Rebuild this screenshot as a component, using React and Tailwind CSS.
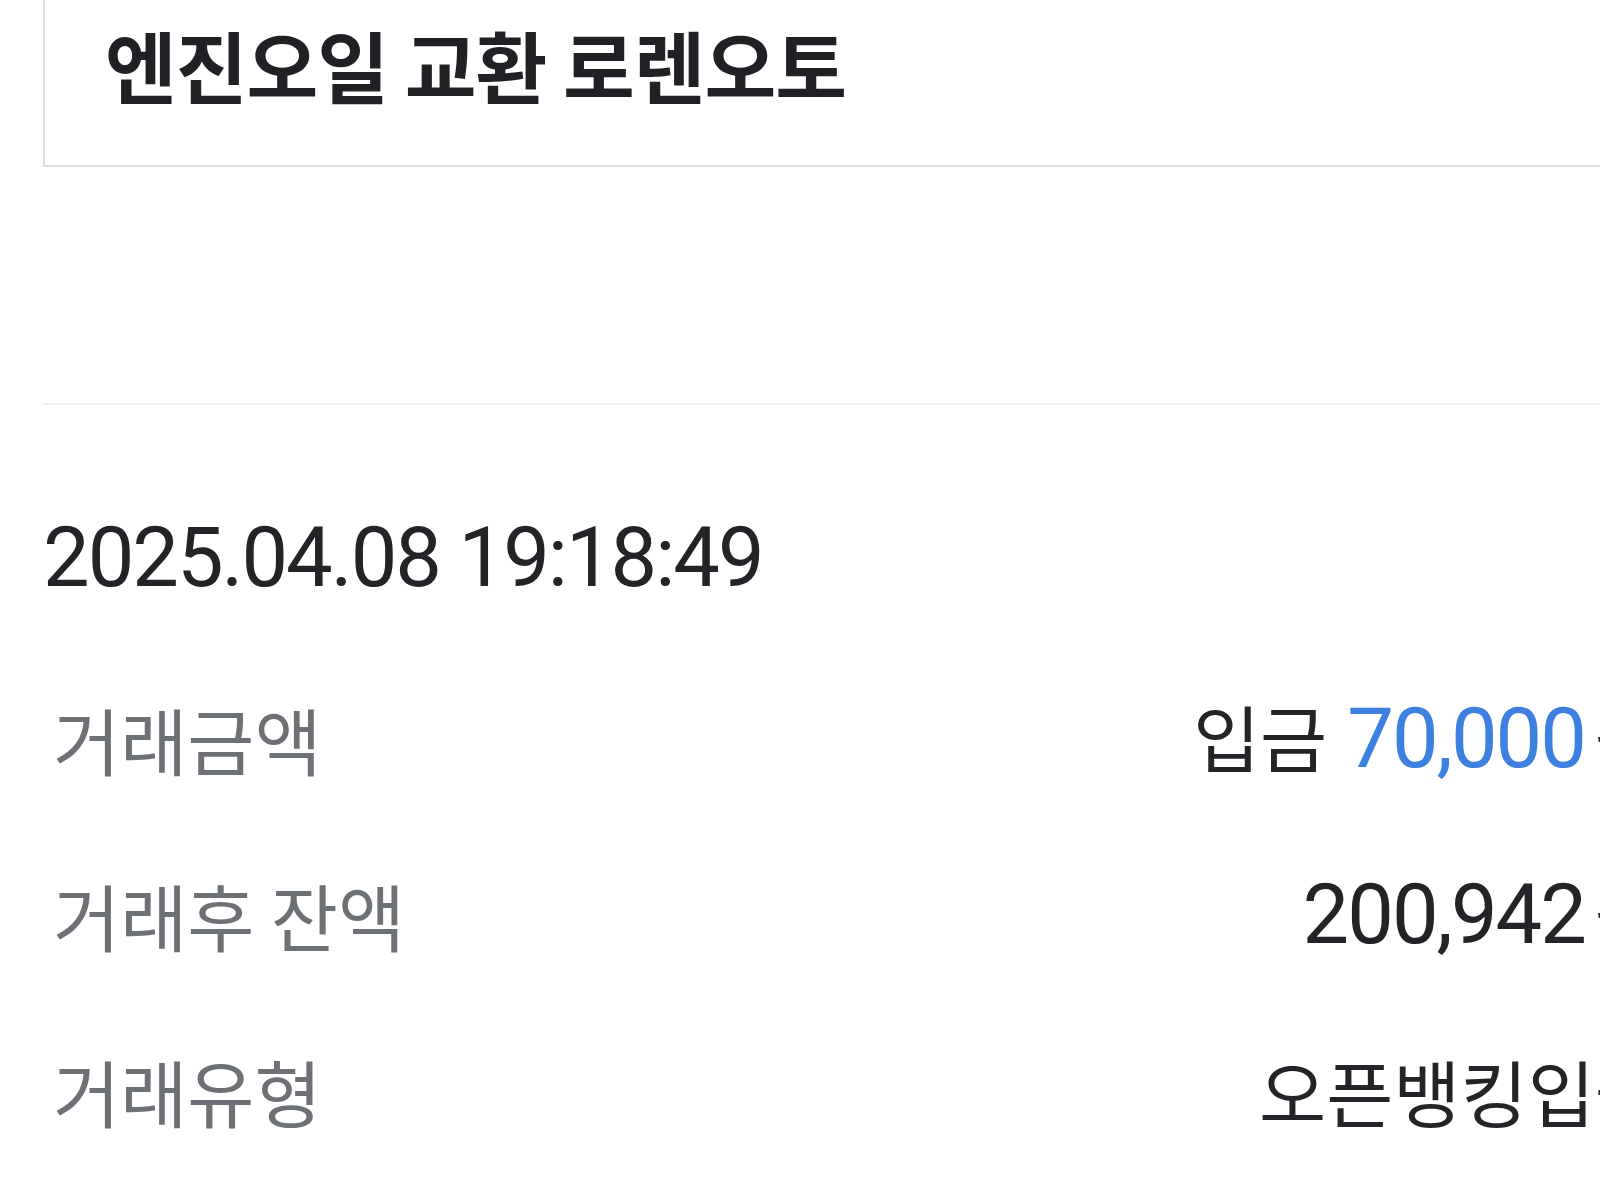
const KR = { fontFamily: '"Noto Sans CJK KR", "Noto Sans", sans-serif' }
const NUM = { fontFamily: 'Roboto, "Noto Sans CJK KR", sans-serif' }

function Row({ label, children }) {
  return (
    <div className="flex items-center justify-between h-[176px]">
      <span className="text-[73px] leading-none text-[#6d7176] pl-[10px]" style={KR}>
        {label}
      </span>
      <span className="flex items-baseline text-[73px] leading-none text-[#222428]" style={KR}>
        {children}
      </span>
    </div>
  )
}

export default function App() {
  return (
    <div className="w-[1600px] h-[1200px] overflow-hidden bg-white">
      <div className="w-[1720px] pl-[43px] pr-[58px]">
        {/* merchant title box */}
        <div className="h-[167px] border-x-2 border-b-2 border-[#dedede] pl-[60px] pt-[25px]">
          <h1 className="text-[78px] font-bold leading-none text-[#1f2125] tracking-[-1px]" style={KR}>
            엔진오일 교환 로렌오토
          </h1>
        </div>

        <div className="h-[236px]" />
        <div className="h-[2px] bg-[#efefef]" />

        <div className="pt-[111px]">
          <p className="text-[83px] leading-none text-[#222428] tracking-[-2px]" style={NUM}>
            2025.04.08 19:18:49
          </p>
        </div>

        <div className="mt-[51px]">
          <Row label="거래금액">
            <span>입금</span>
            <span className="ml-[20px] text-[83px] text-[#3d80df] tracking-[-2px]" style={NUM}>70,000</span>
            <span className="ml-[10px]">원</span>
          </Row>
          <Row label="거래후 잔액">
            <span className="text-[83px] tracking-[-2px]" style={NUM}>200,942</span>
            <span className="ml-[10px]">원</span>
          </Row>
          <Row label="거래유형">
            <span>오픈뱅킹입금</span>
          </Row>
        </div>
      </div>
    </div>
  )
}
